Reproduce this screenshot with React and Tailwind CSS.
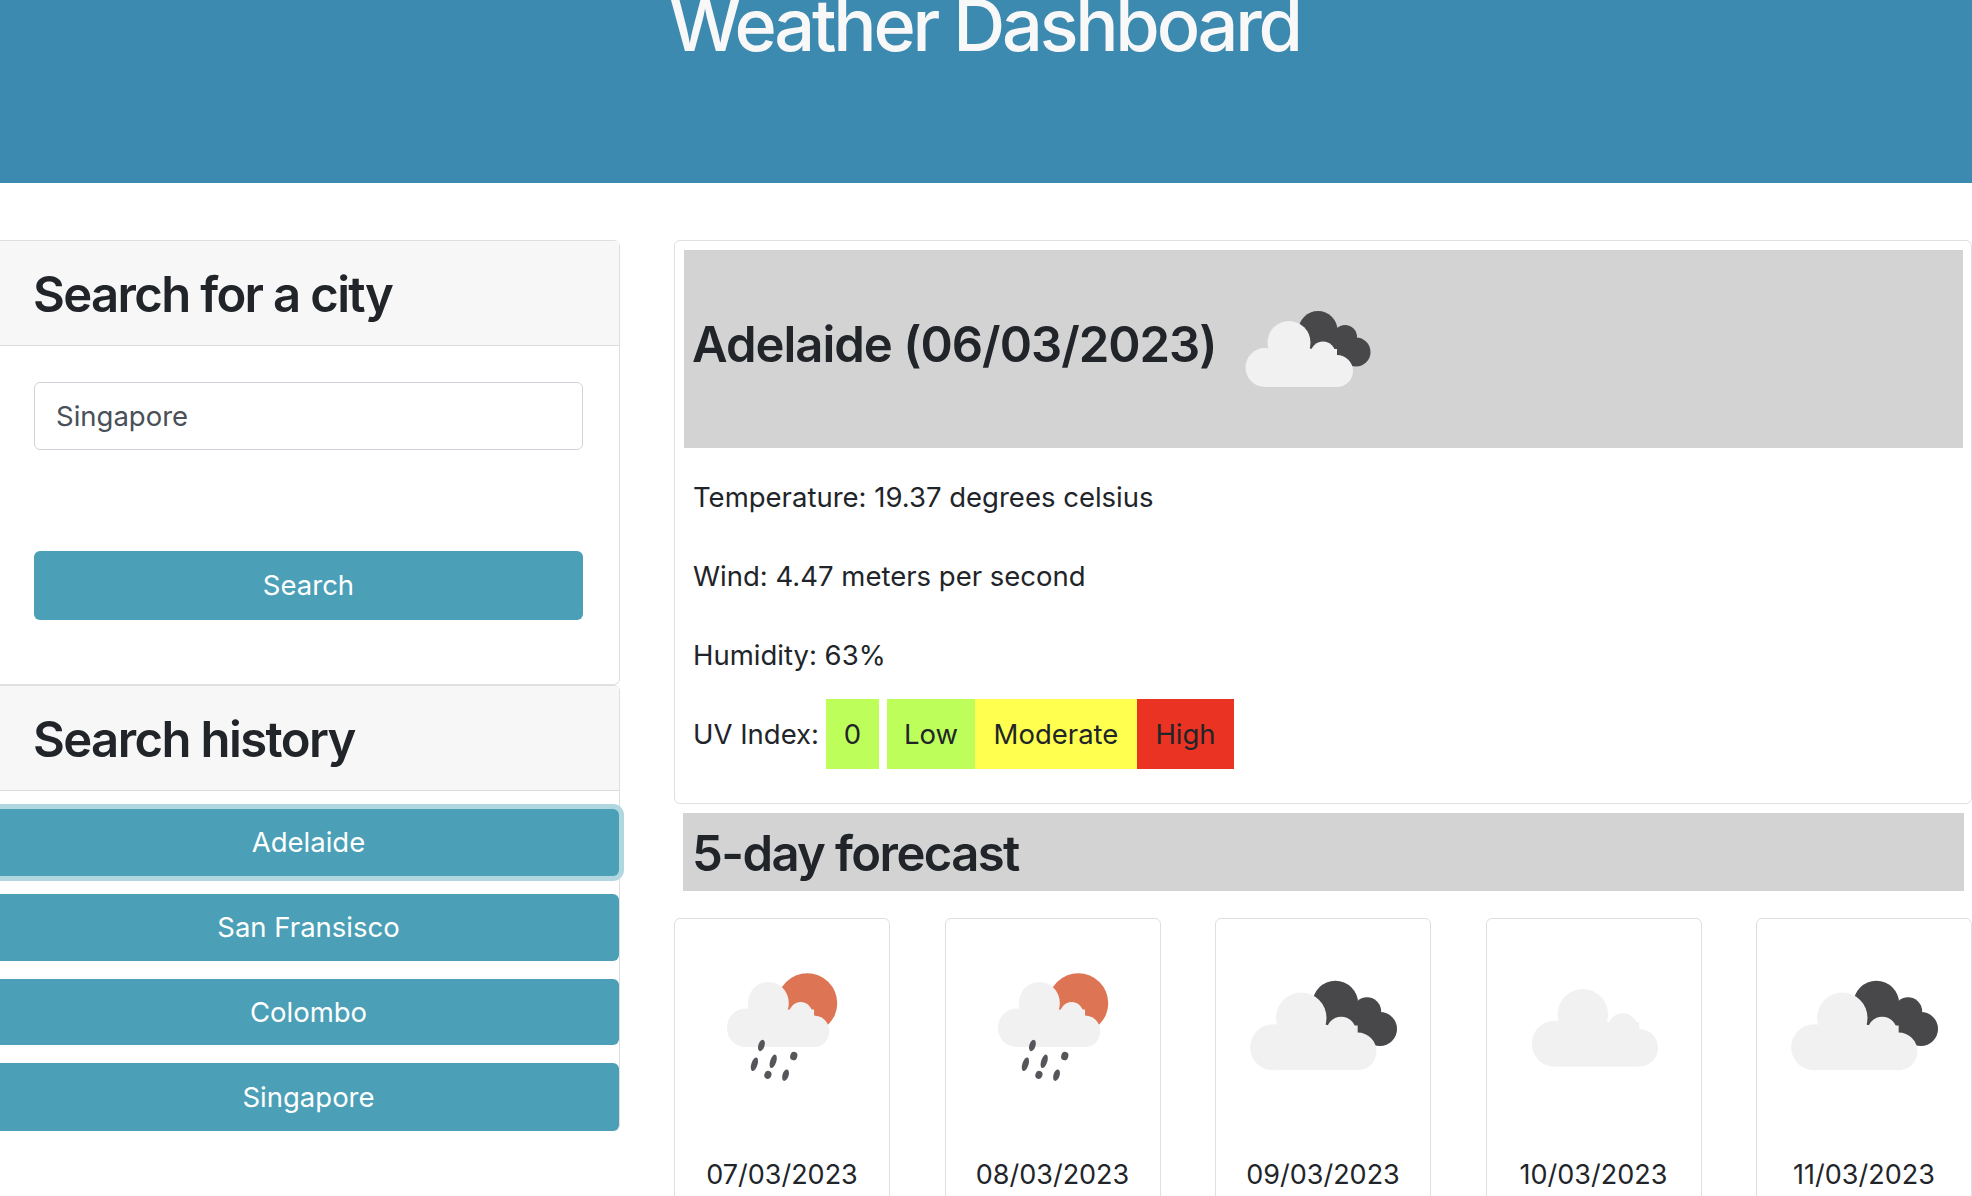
const FONT = "font-['Inter','Liberation_Sans',sans-serif]";

function Cloud({ transform }) {
  return (
    <g fill="#f1f1f1" transform={transform}>
      <circle cx="45" cy="78.5" r="19.5" />
      <circle cx="69" cy="53.5" r="21.5" />
      <circle cx="103" cy="65" r="12.5" />
      <circle cx="117" cy="82" r="16" />
      <rect x="45" y="60" width="72" height="38" />
    </g>
  );
}

function DarkBack() {
  return (
    <g fill="#48484a">
      <circle cx="98" cy="41.5" r="19.5" />
      <circle cx="125" cy="48" r="12" />
      <circle cx="136" cy="63" r="14.5" />
      <rect x="100" y="45" width="30" height="28" />
    </g>
  );
}

function BrokenClouds({ className }) {
  return (
    <svg viewBox="0 0 175 120" className={className}>
      <DarkBack />
      <Cloud />
    </svg>
  );
}

function PlainCloud({ className }) {
  return (
    <svg viewBox="0 0 175 120" className={className}>
      <Cloud transform="translate(9,-3)" />
    </svg>
  );
}

function RainSun({ className }) {
  const drops = [
    [70, 77, 2.6, 5],
    [64, 93, 2.6, 6],
    [80, 90.5, 2.6, 6],
    [97.5, 86, 3, 3.6],
    [75.5, 102, 3, 3.4],
    [90.5, 102.3, 2.6, 5],
  ];
  return (
    <svg viewBox="0 0 175 120" className={className}>
      <circle cx="109" cy="41" r="25.5" fill="#dd7453" />
      <Cloud transform="translate(20,-4) scale(.81,.84)" />
      {drops.map(([x, y, rx, ry]) => (
        <ellipse key={`${x}-${y}`} cx={x} cy={y} rx={rx} ry={ry} fill="#55565a" transform={`rotate(18 ${x} ${y})`} />
      ))}
    </svg>
  );
}

const history = [
  { city: "Adelaide", cls: "h-[67px] shadow-[0_0_0_5px_#b0d6e0]" },
  { city: "San Fransisco", cls: "h-[67px]" },
  { city: "Colombo", cls: "h-[66px]" },
  { city: "Singapore", cls: "h-[68px]" },
];
const days = [
  { date: "07/03/2023", Icon: RainSun },
  { date: "08/03/2023", Icon: RainSun },
  { date: "09/03/2023", Icon: BrokenClouds },
  { date: "10/03/2023", Icon: PlainCloud },
  { date: "11/03/2023", Icon: BrokenClouds },
];

export default function App() {
  return (
    <div className={`${FONT} h-[1196px] overflow-hidden bg-white text-[#212529]`}>
      <header className="h-[183px] overflow-hidden bg-[#3d8ab0]">
        <h1 className="mt-[-17px] pr-[3px] text-center text-[72px] leading-[84px] font-medium tracking-[-3.2px] text-[#f8f8f8]">Weather Dashboard</h1>
      </header>

      <main className="flex gap-[54px] pt-[57px]">
        <aside className="w-[620px] shrink-0">
          <section className="h-[445px] rounded-r-md border-y border-r border-[#dfdfdf]">
            <div className="flex h-[105px] items-center border-b border-[#dcdcdc] bg-[#f7f7f7] pt-[3px] pl-[33px]">
              <h2 className="text-[49px] font-semibold tracking-[-1.65px]">Search for a city</h2>
            </div>
            <div className="px-[34px] pt-[36px]">
              <input
                readOnly
                value="Singapore"
                className="block h-[68px] w-[549px] rounded-md border border-[#ced4da] bg-white px-[21px] text-[27.5px] text-[#495057]"
              />
              <button className="mt-[101px] h-[69px] w-[549px] rounded-md bg-[#4ba0b7] text-[27.5px] text-white">Search</button>
            </div>
          </section>

          <section className="h-[446px] rounded-r-md border-y border-r border-[#dfdfdf]">
            <div className="flex h-[105px] items-center border-b border-[#dcdcdc] bg-[#f7f7f7] pt-[3px] pl-[33px]">
              <h2 className="text-[49px] font-semibold tracking-[-1.6px]">Search history</h2>
            </div>
            <div className="flex flex-col gap-[18px] pt-[18px]">
              {history.map(({ city, cls }) => (
                <button key={city} className={`w-[619px] rounded-r-md bg-[#4ba0b7] pt-[1px] pr-[2px] text-[27.5px] text-white ${cls}`}>
                  {city}
                </button>
              ))}
            </div>
          </section>
        </aside>

        <div className="min-w-0 flex-1">
          <section className="h-[564px] rounded-md border border-[#dfdfdf] pt-[9px] pr-[8px] pl-[9px]">
            <div className="flex h-[198px] items-center bg-[#d3d3d3] pl-[8px]">
              <h2 className="pb-[8px] text-[49px] font-semibold tracking-[-1px]">Adelaide (06/03/2023)</h2>
              <BrokenClouds className="ml-[3px] h-[120px] w-[175px]" />
            </div>
            <div className="pt-[30px] pl-[9px] text-[27.5px] leading-[39px]">
              <p className="mb-[40px]">Temperature: 19.37 degrees celsius</p>
              <p className="mb-[40px]">Wind: 4.47 meters per second</p>
              <p className="mb-[24px]">Humidity: 63%</p>
              <div className="flex h-[70px] items-center">
                <span className="w-[125px] whitespace-nowrap">UV Index:</span>
                <span className="ml-[8px] flex h-full w-[53px] items-center justify-center bg-[#bdfe5a]">0</span>
                <span className="ml-[8px] flex h-full w-[88px] items-center justify-center bg-[#bdfe5a]">Low</span>
                <span className="flex h-full w-[162px] items-center justify-center bg-[#ffff50]">Moderate</span>
                <span className="flex h-full w-[97px] items-center justify-center bg-[#ea3323]">High</span>
              </div>
            </div>
          </section>

          <div className="mt-[9px] mr-[8px] ml-[9px] flex h-[78px] items-center bg-[#d3d3d3] pt-[4px] pl-[9px]">
            <h2 className="text-[49px] font-semibold tracking-[-1.6px]">5-day forecast</h2>
          </div>

          <div className="mt-[27px] flex justify-between">
            {days.map(({ date, Icon }) => (
              <article key={date} className="flex h-[400px] w-[216px] flex-col items-center rounded-md border border-[#dfdfdf] pt-[36px]">
                <Icon className="h-[141px] w-[206px] shrink-0" />
                <p className="mt-[59px] text-[27px] leading-[40px]">{date}</p>
              </article>
            ))}
          </div>
        </div>
      </main>
    </div>
  );
}
